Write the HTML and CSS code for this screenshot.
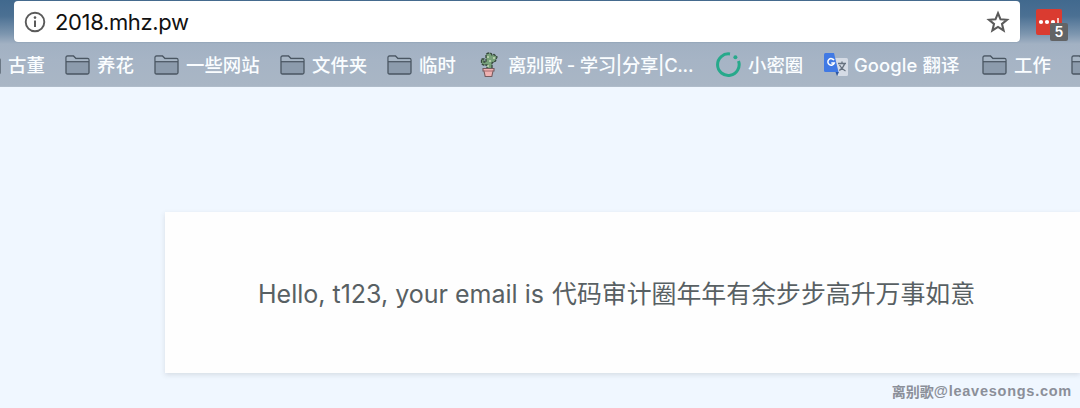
FILE: index.html
```html
<!DOCTYPE html>
<html lang="zh-CN">
<head>
<meta charset="utf-8">
<title>2018.mhz.pw</title>
<link rel="stylesheet" href="styles.css">
</head>
<body>
<svg class="defs" aria-hidden="true">
  <symbol id="folder" viewBox="0 0 25 20">
    <path d="M1 18V2.5Q1 1 2.5 1H8.5L11 3.5H22.5Q24 3.5 24 5V17.5Q24 19 22.5 19H2.5Q1 19 1 17.5Z" fill="#8c9bac" stroke="#4a5662" stroke-width="1.3"/>
    <path d="M1.7 2.5L2.5 1.7H8L10.5 4.2H23.3V6.3H1.7Z" fill="#a7b5c4"/>
    <path d="M1 6.7H24" stroke="#4a5662" stroke-width="1.2"/>
  </symbol>
</svg>
<header class="chrome">
  <div class="toolbar">
    <div class="address">
      <svg class="info" viewBox="0 0 22 22"><circle cx="11" cy="11" r="9.3" fill="none" stroke="#5a5a5a" stroke-width="1.9"/><path d="M11 9.6V16" stroke="#5a5a5a" stroke-width="2"/><circle cx="11" cy="6.6" r="1.3" fill="#5a5a5a"/></svg>
      <span class="url">2018.mhz.pw</span>
      <svg class="star" viewBox="0 0 24 24"><path d="M12 3.2L14.5 9.3L21 9.8L16 14L17.6 20.4L12 16.9L6.4 20.4L8 14L3 9.8L9.5 9.3Z" fill="none" stroke="#5a5a5a" stroke-width="2.1"/></svg>
    </div>
    <div class="extension">
      <svg class="extension-icon" viewBox="0 0 26 26"><rect width="26" height="26" rx="2" fill="#da3b30"/><circle cx="5" cy="13" r="2.1" fill="#fff"/><circle cx="11" cy="13" r="2.1" fill="#fff"/><circle cx="17" cy="13" r="2.1" fill="#fff"/><path d="M22 9V15" stroke="#fff" stroke-width="1.4"/></svg>
      <span class="count">5</span>
    </div>
  </div>
  <nav class="bookmarks">
    <a class="bookmark"><svg class="folder"><use href="#folder"/></svg><span>古董</span></a>
    <a class="bookmark"><svg class="folder"><use href="#folder"/></svg><span>养花</span></a>
    <a class="bookmark"><svg class="folder"><use href="#folder"/></svg><span>一些网站</span></a>
    <a class="bookmark"><svg class="folder"><use href="#folder"/></svg><span>文件夹</span></a>
    <a class="bookmark"><svg class="folder"><use href="#folder"/></svg><span>临时</span></a>
    <a class="bookmark blog">
      <svg class="cactus" viewBox="0 0 20 26"><path d="M8 18V13H4.5Q2.5 12.5 2.5 10V7H5V10H7V3Q7.5 1 10 1Q12.5 1 13 3L15 2.5L18 5L16.5 9L13 11V18Z" fill="#78a17a" stroke="#35483c" stroke-width="1.3" stroke-dasharray="3 .8"/><path d="M9 4V6M11 8V10M9 13V15M15 5V7" stroke="#dce9ca" stroke-width="1.2"/><path d="M4 16.5H15V19H14L12.8 24.5H6.2L5 19H4Z" fill="#efb1b1" stroke="#765b5e" stroke-width="1.1"/><path d="M5 19H14" stroke="#a66d70"/></svg>
      <span class="blog-name">离别歌 - 学习|分享|C...</span></a>
    <a class="bookmark"><svg class="ring" viewBox="0 0 25 25"><path d="M14 2A10.8 10.8 0 1 0 22.5 9" fill="none" stroke="#27a98b" stroke-width="3"/><circle cx="19.4" cy="5.2" r="2" fill="#27a98b"/></svg><span>小密圈</span></a>
    <a class="bookmark"><svg class="translate" viewBox="0 0 25 24"><path d="M9 5H22.5Q24 5 24 6.5V21.5Q24 23 22.5 23H14Z" fill="#d5dbe5"/><path d="M1.5 0H10L14.5 19H1.5Q0 19 0 17.5V1.5Q0 0 1.5 0Z" fill="#4079e4"/><path d="M11.5 19H15L13 23Z" fill="#2c57a4"/><path d="M10 7.2A3.3 3.3 0 1 0 10.3 10H7.3" fill="none" stroke="#fff" stroke-width="1.5"/><path d="M14 10.5H22M18 8.5V10.5M20.5 11Q19 15.5 15.2 17.5M15.5 12Q17.5 16 21.5 18" fill="none" stroke="#66717f" stroke-width="1.3"/></svg><span class="google">Google 翻译</span></a>
    <a class="bookmark"><svg class="folder"><use href="#folder"/></svg><span>工作</span></a>
    <a class="bookmark"><svg class="folder"><use href="#folder"/></svg></a>
  </nav>
</header>
<main class="page">
  <section class="card"><p class="message"><span class="greeting">Hello, t123, your email is </span><span class="email">代码审计圈年年有余步步高升万事如意</span></p></section>
  <footer class="credit"><span class="credit-name">离别歌</span><span class="credit-site">@leavesongs.com</span></footer>
</main>
</body>
</html>
```
FILE: styles.css
```css
* { box-sizing: border-box; }
body {
  margin: 0;
  width: 1080px;
  height: 408px;
  overflow: hidden;
  background: #f0f7ff;
  font-family: Inter, "Noto Sans CJK SC", sans-serif;
}
.defs { display: none; }
.chrome {
  height: 87px;
  background: linear-gradient(#41698e 0, #4b7093 16px, #7d96af 34px, #a2b1c3 44px, #a6b4c5 60px, #a9b6c5 86px, #b6c2cf 87px);
}
.toolbar { display: flex; height: 43px; padding: 1px 0 0 14px; }
.address {
  display: flex;
  align-items: center;
  width: 1006px;
  height: 41px;
  padding: 0 10px;
  border-radius: 4px;
  background: #fff;
  box-shadow: 0 0 1px #63788d;
}
.info { width: 22px; height: 22px; }
.url { margin-left: 9px; color: #111; font-size: 22px; letter-spacing: -.35px; white-space: nowrap; }
.star { width: 24px; height: 24px; margin-left: auto; }
.extension { position: relative; width: 32px; height: 32px; margin: 8px 0 0 16px; }
.extension-icon { display: block; width: 26px; height: 26px; }
.count {
  position: absolute;
  left: 14px;
  top: 14px;
  width: 18px;
  height: 18px;
  border-radius: 2px;
  background: #626466;
  color: #fff;
  font-size: 14px;
  font-weight: 600;
  line-height: 18px;
  text-align: center;
}
.bookmarks {
  display: grid;
  grid-template-columns: 89px 89px 126px 107px 92px 237px 108px 158px 89px 25px;
  height: 44px;
  margin-left: -24px;
}
.bookmark {
  display: flex;
  align-items: center;
  height: 43px;
  color: #fafdff;
  font-size: 18.4px;
  font-weight: 500;
  white-space: nowrap;
}
.bookmark svg { flex: none; margin-right: 7px; }
.bookmark span { padding-bottom: 2px; }
.folder { width: 25px; height: 20px; }
.ring { width: 25px; height: 25px; }
.bookmark .translate { width: 25px; height: 24px; margin-right: 5px; }
.google { letter-spacing: .1px; }
.blog-name { letter-spacing: -.3px; }
.bookmark .cactus { width: 20px; height: 26px; margin-right: 9px; }
.page { display: flex; flex-direction: column; height: 321px; padding-top: 125px; }
.card {
  display: flex;
  align-items: center;
  height: 162px;
  margin-left: 165px;
  padding: 3px 0 0 93px;
  background: #fefefe;
  box-shadow: 0 2px 5px rgba(80, 85, 95, .16);
}
.message { margin: 0; color: #586063; font-size: 24.9px; line-height: 36px; white-space: nowrap; }
.greeting { display: inline-block; width: 294px; font-size: 25px; white-space: pre; }
.credit {
  display: flex;
  align-items: center;
  align-self: flex-end;
  height: 35px;
  padding-right: 8px;
  color: #8b8f99;
  font-weight: 700;
}
.credit-name { font-size: 14px; }
.credit-site { font-family: "Liberation Sans", Arial, sans-serif; font-size: 14.5px; letter-spacing: .75px; }
```
